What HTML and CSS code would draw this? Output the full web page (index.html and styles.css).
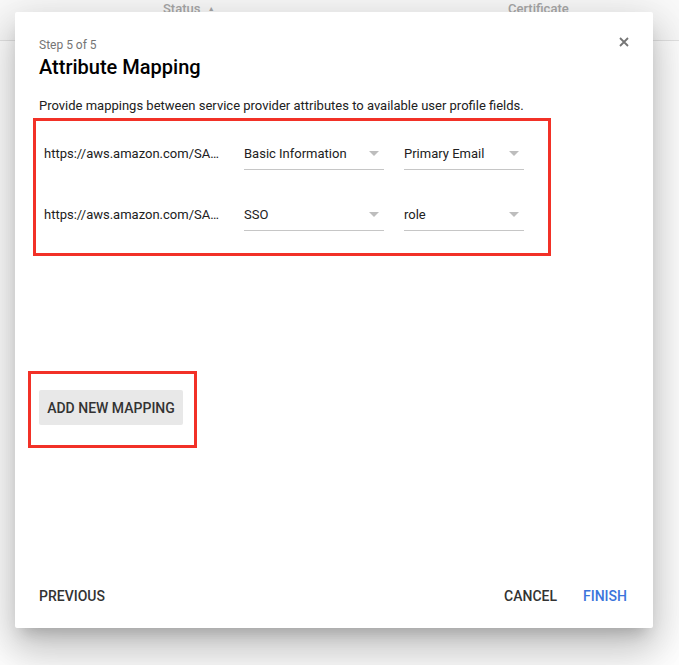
FILE: index.html
```html
<!DOCTYPE html>
<html lang="en">
<head>
    <meta charset="UTF-8">
    <title>Attribute Mapping</title>
    <link rel="stylesheet" href="styles.css">
</head>
<body>
    <div class="table-head">
        <span class="col-status">Status <span class="sort">&#9650;</span></span>
        <span class="col-cert">Certificate</span>
    </div>

    <div class="dialog">
        <button class="close" aria-label="Close">
            <svg width="10" height="10" viewBox="0 0 10 10"><path d="M1 1L9 9M9 1L1 9" stroke="#757575" stroke-width="1.8"/></svg>
        </button>
        <div class="step">Step 5 of 5</div>
        <h2>Attribute Mapping</h2>
        <p class="desc">Provide mappings between service provider attributes to available user profile fields.</p>

        <div class="highlight mappings">
            <div class="map-row">
                <div class="attr" title="https://aws.amazon.com/SAML/Attributes/RoleSessionName">https://aws.amazon.com/SA…</div>
                <div class="select wide"><span>Basic Information</span><i class="caret"></i></div>
                <div class="select"><span>Primary Email</span><i class="caret"></i></div>
            </div>
            <div class="map-row">
                <div class="attr" title="https://aws.amazon.com/SAML/Attributes/Role">https://aws.amazon.com/SA…</div>
                <div class="select wide"><span>SSO</span><i class="caret"></i></div>
                <div class="select"><span>role</span><i class="caret"></i></div>
            </div>
        </div>

        <div class="highlight add-box">
            <button class="btn-add">ADD NEW MAPPING</button>
        </div>

        <div class="footer">
            <button class="btn-text">PREVIOUS</button>
            <div class="right">
                <button class="btn-text">CANCEL</button>
                <button class="btn-text primary">FINISH</button>
            </div>
        </div>
    </div>
</body>
</html>
```

FILE: styles.css
```css
* {
    margin: 0;
    padding: 0;
    box-sizing: border-box;
}

body {
    font-family: Roboto, 'Liberation Sans', sans-serif;
    background: #fff;
    color: #212121;
    width: 679px;
    height: 665px;
    overflow: hidden;
}

.table-head {
    height: 41px;
    border-bottom: 1px solid #e4e4e4;
    background: #fafafa;
    font-size: 13px;
    font-weight: 500;
    color: #a8a8a8;
    position: relative;
}

.col-status {
    position: absolute;
    left: 163px;
    top: 1px;
}

.sort {
    font-size: 7px;
    margin-left: 4px;
    vertical-align: 2px;
}

.col-cert {
    position: absolute;
    left: 508px;
    top: 1px;
}

.dialog {
    position: absolute;
    left: 15px;
    top: 12px;
    width: 638px;
    height: 616px;
    background: #fff;
    border-radius: 2px;
    box-shadow: 0 11px 15px -7px rgba(0, 0, 0, 0.2),
                0 24px 38px 3px rgba(0, 0, 0, 0.14),
                0 9px 46px 8px rgba(0, 0, 0, 0.12);
    padding: 25px 24px 0 24px;
    display: flex;
    flex-direction: column;
}

.close {
    position: absolute;
    right: 24px;
    top: 25px;
    border: none;
    background: none;
    width: 10px;
    height: 10px;
    cursor: pointer;
}

.close svg {
    display: block;
}

.step {
    font-size: 12px;
    line-height: 16px;
    color: #757575;
}

h2 {
    font-size: 20px;
    font-weight: 500;
    line-height: 28px;
    color: #000;
}

.desc {
    font-size: 13px;
    line-height: 18px;
    margin-top: 16px;
    color: #212121;
}

.highlight {
    border: 3px solid #f23127;
}

.mappings {
    width: 518px;
    margin: 3px 0 0 -6px;
    padding: 16px 0 22px 8px;
    display: flex;
    flex-direction: column;
    gap: 28px;
}

.map-row {
    display: flex;
    align-items: center;
}

.attr {
    width: 176px;
    margin-right: 24px;
    font-size: 13px;
    white-space: nowrap;
}

.select {
    width: 120px;
    height: 33px;
    border-bottom: 1px solid #c6c6c6;
    display: flex;
    align-items: center;
    justify-content: space-between;
    font-size: 13px;
    padding-top: 1px;
}

.select.wide {
    width: 140px;
    margin-right: 20px;
}

.caret {
    width: 0;
    height: 0;
    border-left: 5px solid transparent;
    border-right: 5px solid transparent;
    border-top: 5px solid #bdbdbd;
    margin-right: 5px;
}

.add-box {
    align-self: flex-start;
    width: 169px;
    margin: 115px 0 0 -11px;
    padding: 16px 11px 20px 8px;
}

.btn-add {
    display: block;
    width: 144px;
    height: 35px;
    border: none;
    border-radius: 2px;
    background: #e8e8e8;
    font-family: inherit;
    font-size: 14px;
    font-weight: 500;
    color: #333;
    cursor: pointer;
}

.footer {
    margin-top: auto;
    height: 42px;
    display: flex;
    justify-content: space-between;
    align-items: flex-start;
    margin-right: 2px;
}

.footer .right {
    display: flex;
    gap: 26px;
}

.btn-text {
    border: none;
    background: none;
    font-family: inherit;
    font-size: 14px;
    font-weight: 500;
    color: #333;
    line-height: 20px;
    cursor: pointer;
}

.btn-text.primary {
    color: #3b74db;
}
```
